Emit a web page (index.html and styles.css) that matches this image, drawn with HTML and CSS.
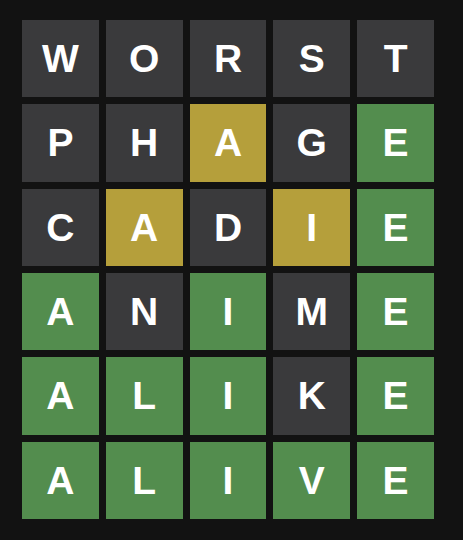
FILE: index.html
```html
<!DOCTYPE html>
<html>
<head>
<meta charset="utf-8">
<link rel="stylesheet" href="styles.css">
</head>
<body>
<div class="board">
  <div class="tile absent">W</div><div class="tile absent">O</div><div class="tile absent">R</div><div class="tile absent">S</div><div class="tile absent">T</div>
  <div class="tile absent">P</div><div class="tile absent">H</div><div class="tile present">A</div><div class="tile absent">G</div><div class="tile correct">E</div>
  <div class="tile absent">C</div><div class="tile present">A</div><div class="tile absent">D</div><div class="tile present">I</div><div class="tile correct">E</div>
  <div class="tile correct">A</div><div class="tile absent">N</div><div class="tile correct">I</div><div class="tile absent">M</div><div class="tile correct">E</div>
  <div class="tile correct">A</div><div class="tile correct">L</div><div class="tile correct">I</div><div class="tile absent">K</div><div class="tile correct">E</div>
  <div class="tile correct">A</div><div class="tile correct">L</div><div class="tile correct">I</div><div class="tile correct">V</div><div class="tile correct">E</div>
</div>
</body>
</html>
```
FILE: styles.css
```css
html, body {
  margin: 0;
  background: #121212;
}
body {
  padding: 20px 0 0 22px;
  width: 463px;
  height: 540px;
  box-sizing: border-box;
  overflow: hidden;
}
.board {
  display: grid;
  grid-template-columns: repeat(5, 1fr);
  grid-template-rows: repeat(6, 1fr);
  gap: 7px;
  width: 412px;
  height: 499px;
}
.tile {
  display: flex;
  align-items: center;
  justify-content: center;
  color: #ffffff;
  font-family: "Liberation Sans", Arial, sans-serif;
  font-weight: bold;
  font-size: 39px;
  line-height: 1;
}
.absent { background: #3a3a3c; }
.present { background: #b59f3b; }
.correct { background: #538d4e; }
```
